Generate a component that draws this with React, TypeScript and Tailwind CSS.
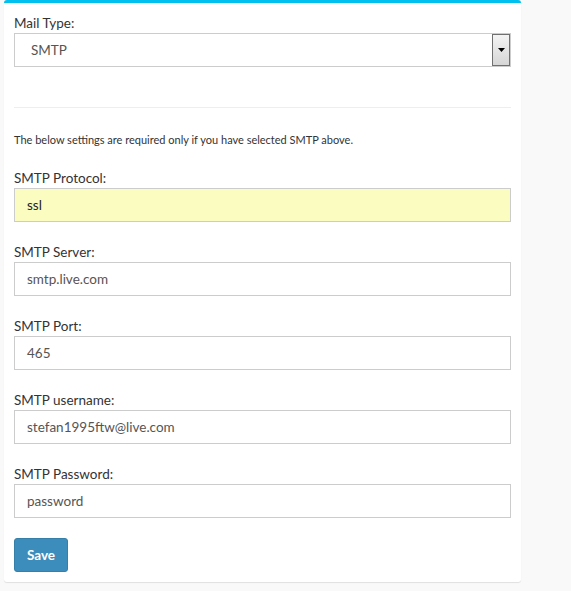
const fields = [
  { label: "SMTP Protocol:", value: "ssl", highlight: true },
  { label: "SMTP Server:", value: "smtp.live.com" },
  { label: "SMTP Port:", value: "465" },
  { label: "SMTP username:", value: "stefan1995ftw@live.com" },
  { label: "SMTP Password:", value: "password" },
];

export default function App() {
  return (
    <div className="min-h-[591px] w-[571px] bg-[#f9f9f9] pl-[4px] font-['Lato','Liberation_Sans',sans-serif] text-[#333]">
      <div className="w-[517px] rounded-[3px] border-t-[3px] border-[#00c0ef] bg-white px-[10px] pt-[10px] pb-[10px] shadow-[0_1px_1px_rgba(0,0,0,0.1)]">
        {/* Mail type */}
        <label className="block text-[13.5px] leading-[20px]">Mail Type:</label>
        <div className="relative flex h-[34px] items-center border border-[#ccc] bg-white pl-[16px] text-[13.5px] text-[#555]">
          SMTP
          <div className="absolute top-0 right-0 flex h-[32px] w-[18px] items-center justify-center border border-[#707070] bg-gradient-to-b from-[#f4f4f4] to-[#d6d6d6]">
            <svg width="7" height="4" viewBox="0 0 7 4">
              <path d="M0 0h7L3.5 4z" fill="#000" />
            </svg>
          </div>
        </div>

        <hr className="mt-[40px] mb-0 border-t border-[#eee]" />

        <p className="mt-[23px] text-[11px] leading-[17px] text-[#333]">
          The below settings are required only if you have selected SMTP above.
        </p>

        {fields.map((f, i) => (
          <div key={i} className={i === 0 ? "mt-[20px]" : "mt-[20px]"}>
            <label className="block text-[13.5px] leading-[20px]">{f.label}</label>
            <div
              className={
                "flex h-[34px] items-center border border-[#ccc] px-[12px] text-[13.5px] " +
                (f.highlight ? "bg-[#fafdbf] text-[#222]" : "bg-white text-[#555]")
              }
            >
              {f.value}
            </div>
          </div>
        ))}

        <button className="mt-[20px] h-[34px] w-[54px] rounded-[3px] border border-[#367fa9] bg-[#3c8dbc] text-[13.5px] font-bold text-white">
          Save
        </button>
      </div>
    </div>
  );
}
